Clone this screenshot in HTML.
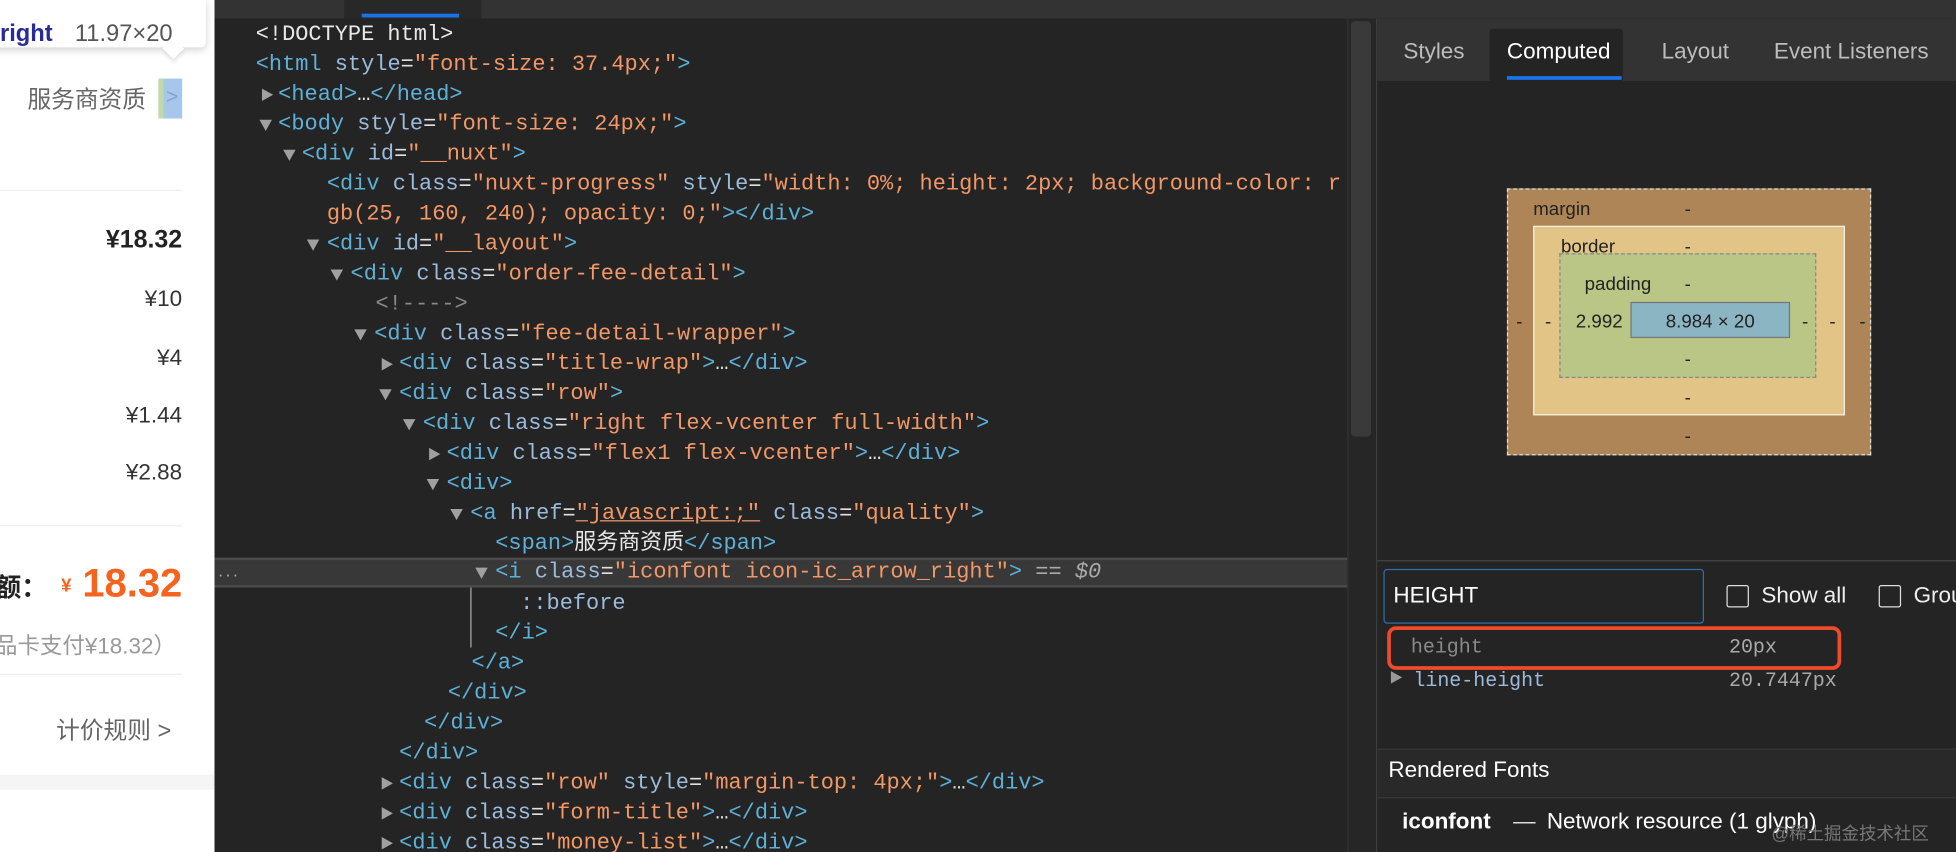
<!DOCTYPE html>
<html><head><meta charset="utf-8"><style>
*{margin:0;padding:0;box-sizing:border-box}
html,body{width:1956px;height:852px;overflow:hidden;background:#242424}
#s{position:absolute;left:0;top:0;width:1568px;height:683px;transform:scale(1.24745);transform-origin:0 0;font-family:"Liberation Sans","Noto Sans CJK SC",sans-serif}
.a{position:absolute;white-space:nowrap}
#left{position:absolute;left:0;top:0;width:172px;height:683px;background:#fff;overflow:hidden}
.hr{position:absolute;left:0;width:146px;height:1px;background:#eeeeee}
.pr{position:absolute;right:26px;font-size:18px;color:#333;transform:translateY(-50%)}
#el{position:absolute;left:172px;top:15px;width:908px;height:668px;background:#242424;overflow:hidden}
.ln{position:absolute;font-family:"Liberation Mono","Noto Sans CJK SC",monospace;font-size:17.6px;line-height:24px;height:24px;white-space:nowrap;color:#e0e0e0}
.t{color:#5db0d7}.n{color:#9bbbdc}.v{color:#f29766}.c{color:#898989}.w{color:#e8e8e8}
.tr{position:absolute;width:0;height:0}
.dn{border-left:5px solid transparent;border-right:5px solid transparent;border-top:9px solid #a0a0a0}
.rt{border-top:5px solid transparent;border-bottom:5px solid transparent;border-left:9px solid #a0a0a0}
#rp{position:absolute;left:1103px;top:15px;width:465px;height:668px;background:#242424;border-left:1px solid #3d3d3d}
.tab{position:absolute;top:16px;font-size:18px;color:#bdbdbd}
.bm{position:absolute;font-size:15px;color:#222;transform:translate(-50%,-50%)}
</style></head><body><div id="s">
<div id="left">
  <div class="a" style="left:-10px;top:0;width:175px;height:38px;background:#fff;box-shadow:0 2px 6px rgba(0,0,0,.18);border-radius:0 0 4px 0"></div>
  <div class="a" style="left:133px;top:33px;width:12px;height:12px;background:#fff;transform:rotate(45deg);box-shadow:2px 2px 3px rgba(0,0,0,.1)"></div>
  <div class="a" style="left:0;top:17px;font-size:19px;font-weight:bold;color:#2a2a98">right</div>
  <div class="a" style="left:60px;top:17px;font-size:19px;color:#555">11.97×20</div>
  <div class="a" style="left:22px;top:65px;font-size:19px;color:#666">服务商资质</div>
  <div class="a" style="left:127px;top:63px;width:19px;height:32px;background:#a7c7ea"></div>
  <div class="a" style="left:127px;top:63px;width:4px;height:32px;background:#c1d9a9"></div>
  <div class="a" style="left:133px;top:68px;font-size:17px;color:#7aa6d8">&gt;</div>
  <div class="hr" style="top:152px"></div>
  <div class="pr" style="top:193px;font-size:20px;font-weight:bold;color:#222">¥18.32</div>
  <div class="pr" style="top:240px">¥10</div>
  <div class="pr" style="top:287px">¥4</div>
  <div class="pr" style="top:333px">¥1.44</div>
  <div class="pr" style="top:379px">¥2.88</div>
  <div class="hr" style="top:421px"></div>
  <div class="a" style="left:-4px;top:455px;font-size:21px;font-weight:bold;color:#222">额：</div>
  <div class="a" style="left:49px;top:461px;font-size:15px;font-weight:bold;color:#f5641e">¥</div>
  <div class="a" style="left:66px;top:449px;font-size:32px;font-weight:bold;color:#f5641e">18.32</div>
  <div class="a" style="left:-4px;top:504px;font-size:18px;color:#999">品卡支付¥18.32）</div>
  <div class="hr" style="top:540px"></div>
  <div class="a" style="left:45px;top:571px;font-size:19px;color:#666">计价规则 &gt;</div>
  <div class="a" style="left:0;top:621px;width:172px;height:12px;background:#f5f5f5"></div>
</div>
<div class="a" style="left:172px;top:0;width:1396px;height:15px;background:#333"></div>
<div class="a" style="left:276px;top:0;width:110px;height:15px;background:#282828"></div>
<div class="a" style="left:290px;top:11px;width:78px;height:3px;background:#1a73e8"></div>
<div id="el">
<div class="ln" style="left:33px;top:1px"><span class="w">&lt;!DOCTYPE html&gt;</span></div>
<div class="ln" style="left:33px;top:25px"><span class="t">&lt;html</span> <span class="n">style</span>=<span class="v">"font-size: 37.4px;"</span><span class="t">&gt;</span></div>
<div class="tr rt" style="left:38px;top:56px"></div><div class="ln" style="left:51px;top:49px"><span class="t">&lt;head&gt;</span>…<span class="t">&lt;/head&gt;</span></div>
<div class="tr dn" style="left:36px;top:81px"></div><div class="ln" style="left:51px;top:73px"><span class="t">&lt;body</span> <span class="n">style</span>=<span class="v">"font-size: 24px;"</span><span class="t">&gt;</span></div>
<div class="tr dn" style="left:55px;top:105px"></div><div class="ln" style="left:70px;top:97px"><span class="t">&lt;div</span> <span class="n">id</span>=<span class="v">"__nuxt"</span><span class="t">&gt;</span></div>
<div class="ln" style="left:90px;top:121px"><span class="t">&lt;div</span> <span class="n">class</span>=<span class="v">"nuxt-progress"</span> <span class="n">style</span>=<span class="v">"width: 0%; height: 2px; background-color: r</span></div>
<div class="ln" style="left:90px;top:145px"><span class="v">gb(25, 160, 240); opacity: 0;"</span><span class="t">&gt;&lt;/div&gt;</span></div>
<div class="tr dn" style="left:74px;top:177px"></div><div class="ln" style="left:90px;top:169px"><span class="t">&lt;div</span> <span class="n">id</span>=<span class="v">"__layout"</span><span class="t">&gt;</span></div>
<div class="tr dn" style="left:93px;top:201px"></div><div class="ln" style="left:109px;top:193px"><span class="t">&lt;div</span> <span class="n">class</span>=<span class="v">"order-fee-detail"</span><span class="t">&gt;</span></div>
<div class="ln" style="left:129px;top:217px"><span class="c">&lt;!----&gt;</span></div>
<div class="tr dn" style="left:112px;top:249px"></div><div class="ln" style="left:128px;top:241px"><span class="t">&lt;div</span> <span class="n">class</span>=<span class="v">"fee-detail-wrapper"</span><span class="t">&gt;</span></div>
<div class="tr rt" style="left:134px;top:272px"></div><div class="ln" style="left:148px;top:265px"><span class="t">&lt;div</span> <span class="n">class</span>=<span class="v">"title-wrap"</span><span class="t">&gt;</span>…<span class="t">&lt;/div&gt;</span></div>
<div class="tr dn" style="left:132px;top:297px"></div><div class="ln" style="left:148px;top:289px"><span class="t">&lt;div</span> <span class="n">class</span>=<span class="v">"row"</span><span class="t">&gt;</span></div>
<div class="tr dn" style="left:151px;top:321px"></div><div class="ln" style="left:167px;top:313px"><span class="t">&lt;div</span> <span class="n">class</span>=<span class="v">"right flex-vcenter full-width"</span><span class="t">&gt;</span></div>
<div class="tr rt" style="left:172px;top:344px"></div><div class="ln" style="left:186px;top:337px"><span class="t">&lt;div</span> <span class="n">class</span>=<span class="v">"flex1 flex-vcenter"</span><span class="t">&gt;</span>…<span class="t">&lt;/div&gt;</span></div>
<div class="tr dn" style="left:170px;top:369px"></div><div class="ln" style="left:186px;top:361px"><span class="t">&lt;div&gt;</span></div>
<div class="tr dn" style="left:189px;top:393px"></div><div class="ln" style="left:205px;top:385px"><span class="t">&lt;a</span> <span class="n">href</span>=<span class="v" style="text-decoration:underline">"javascript:;"</span> <span class="n">class</span>=<span class="v">"quality"</span><span class="t">&gt;</span></div>
<div class="ln" style="left:225px;top:409px"><span class="t">&lt;span&gt;</span><span class="w">服务商资质</span><span class="t">&lt;/span&gt;</span></div>
<div class="a" style="left:0;top:432px;width:908px;height:24px;background:#383838;border-top:2px solid #4a4a4a;border-bottom:2px solid #4a4a4a"></div>
<div class="a" style="left:3px;top:434px;color:#aaa;font-size:14px;letter-spacing:2px">...</div>
<div class="tr dn" style="left:209px;top:440px"></div><div class="ln" style="left:225px;top:432px"><span class="t">&lt;i</span> <span class="n">class</span>=<span class="v">"iconfont icon-ic_arrow_right"</span><span class="t">&gt;</span> <span style="color:#aaa">== <i>$0</i></span></div>
<div class="a" style="left:205px;top:456px;width:1px;height:48px;background:#aaa"></div>
<div class="ln" style="left:245px;top:457px"><span class="n">::before</span></div>
<div class="ln" style="left:225px;top:481px"><span class="t">&lt;/i&gt;</span></div>
<div class="ln" style="left:206px;top:505px"><span class="t">&lt;/a&gt;</span></div>
<div class="ln" style="left:187px;top:529px"><span class="t">&lt;/div&gt;</span></div>
<div class="ln" style="left:168px;top:553px"><span class="t">&lt;/div&gt;</span></div>
<div class="ln" style="left:148px;top:577px"><span class="t">&lt;/div&gt;</span></div>
<div class="tr rt" style="left:134px;top:608px"></div><div class="ln" style="left:148px;top:601px"><span class="t">&lt;div</span> <span class="n">class</span>=<span class="v">"row"</span> <span class="n">style</span>=<span class="v">"margin-top: 4px;"</span><span class="t">&gt;</span>…<span class="t">&lt;/div&gt;</span></div>
<div class="tr rt" style="left:134px;top:632px"></div><div class="ln" style="left:148px;top:625px"><span class="t">&lt;div</span> <span class="n">class</span>=<span class="v">"form-title"</span><span class="t">&gt;</span>…<span class="t">&lt;/div&gt;</span></div>
<div class="tr rt" style="left:134px;top:656px"></div><div class="ln" style="left:148px;top:649px"><span class="t">&lt;div</span> <span class="n">class</span>=<span class="v">"money-list"</span><span class="t">&gt;</span>…<span class="t">&lt;/div&gt;</span></div>
</div>
<div class="a" style="left:1080px;top:15px;width:23px;height:668px;background:#262626;border-left:1px solid #333"></div>
<div class="a" style="left:1083px;top:17px;width:16px;height:333px;background:#3a3a3a;border-radius:3px"></div>
<div id="rp">
  <div class="a" style="left:0;top:0;width:465px;height:50px;background:#333"></div>
  <div class="a" style="left:90px;top:8px;width:107px;height:42px;background:#242424;border-radius:3px 3px 0 0"></div>
  <div class="a" style="left:104px;top:46px;width:92px;height:3px;background:#1a73e8"></div>
  <div class="tab" style="left:21px">Styles</div>
  <div class="tab" style="left:104px;color:#fff">Computed</div>
  <div class="tab" style="left:228px">Layout</div>
  <div class="tab" style="left:318px">Event Listeners</div>
  <div class="a" style="left:104px;top:136px;width:292px;height:214px;background:#ad8556;border:1px dashed #ddd"></div>
  <div class="a" style="left:125px;top:166px;width:250px;height:152px;background:#e2c487;border:1px solid #f5f0e0"></div>
  <div class="a" style="left:146px;top:188px;width:206px;height:100px;background:#b9c685;border:1px dashed #888"></div>
  <div class="a" style="left:203px;top:227px;width:128px;height:29px;background:#8cb5c4;border:1px solid #777"></div>
  <div class="bm" style="left:148px;top:153px">margin</div>
  <div class="bm" style="left:249px;top:153px">-</div>
  <div class="bm" style="left:169px;top:183px">border</div>
  <div class="bm" style="left:249px;top:183px">-</div>
  <div class="bm" style="left:193px;top:213px">padding</div>
  <div class="bm" style="left:249px;top:213px">-</div>
  <div class="bm" style="left:178px;top:243px">2.992</div>
  <div class="bm" style="left:267px;top:243px">8.984 × 20</div>
  <div class="bm" style="left:249px;top:273px">-</div>
  <div class="bm" style="left:249px;top:304px">-</div>
  <div class="bm" style="left:249px;top:335px">-</div>
  <div class="bm" style="left:114px;top:243px">-</div>
  <div class="bm" style="left:137px;top:243px">-</div>
  <div class="bm" style="left:343px;top:243px">-</div>
  <div class="bm" style="left:365px;top:243px">-</div>
  <div class="bm" style="left:389px;top:243px">-</div>
  <div class="a" style="left:0;top:434px;width:465px;height:1px;background:#444"></div>
  <div class="a" style="left:5px;top:441px;width:257px;height:44px;border:1px solid #2d6eaa;border-radius:3px"></div>
  <div class="a" style="left:13px;top:452px;font-size:18px;color:#fff">HEIGHT</div>
  <div class="a" style="left:280px;top:454px;width:18px;height:18px;border:1.5px solid #ddd;border-radius:2px"></div>
  <div class="a" style="left:308px;top:452px;font-size:18px;color:#eee">Show all</div>
  <div class="a" style="left:402px;top:454px;width:18px;height:18px;border:1.5px solid #ddd;border-radius:2px"></div>
  <div class="a" style="left:430px;top:452px;font-size:18px;color:#eee">Grou</div>
  <div class="a" style="left:8px;top:487px;width:364px;height:35px;border:3px solid #ef4a2b;border-radius:7px"></div>
  <div class="a" style="left:27px;top:495px;font-family:'Liberation Mono',monospace;font-size:16px;color:#8a8a8a">height</div>
  <div class="a" style="left:282px;top:495px;font-family:'Liberation Mono',monospace;font-size:16px;color:#aaa">20px</div>
  <div class="tr rt" style="left:11px;top:523px;border-left-color:#999"></div>
  <div class="a" style="left:29px;top:522px;font-family:'Liberation Mono',monospace;font-size:16px;color:#9bbbdc">line-height</div>
  <div class="a" style="left:282px;top:522px;font-family:'Liberation Mono',monospace;font-size:16px;color:#aaa">20.7447px</div>
  <div class="a" style="left:0;top:585px;width:465px;height:40px;background:#292929;border-top:1px solid #383838;border-bottom:1px solid #383838"></div>
  <div class="a" style="left:9px;top:592px;font-size:18px;color:#fff">Rendered Fonts</div>
  <div class="a" style="left:20px;top:633px;font-size:18px;color:#fff;font-weight:bold">iconfont</div>
  <div class="a" style="left:109px;top:633px;font-size:18px;color:#ddd">—</div>
  <div class="a" style="left:136px;top:633px;font-size:18px;color:#fff">Network resource (1 glyph)</div>
  <div class="a" style="left:316px;top:643px;font-size:14px;color:#777">@稀土掘金技术社区</div>
</div>
</div></body></html>
